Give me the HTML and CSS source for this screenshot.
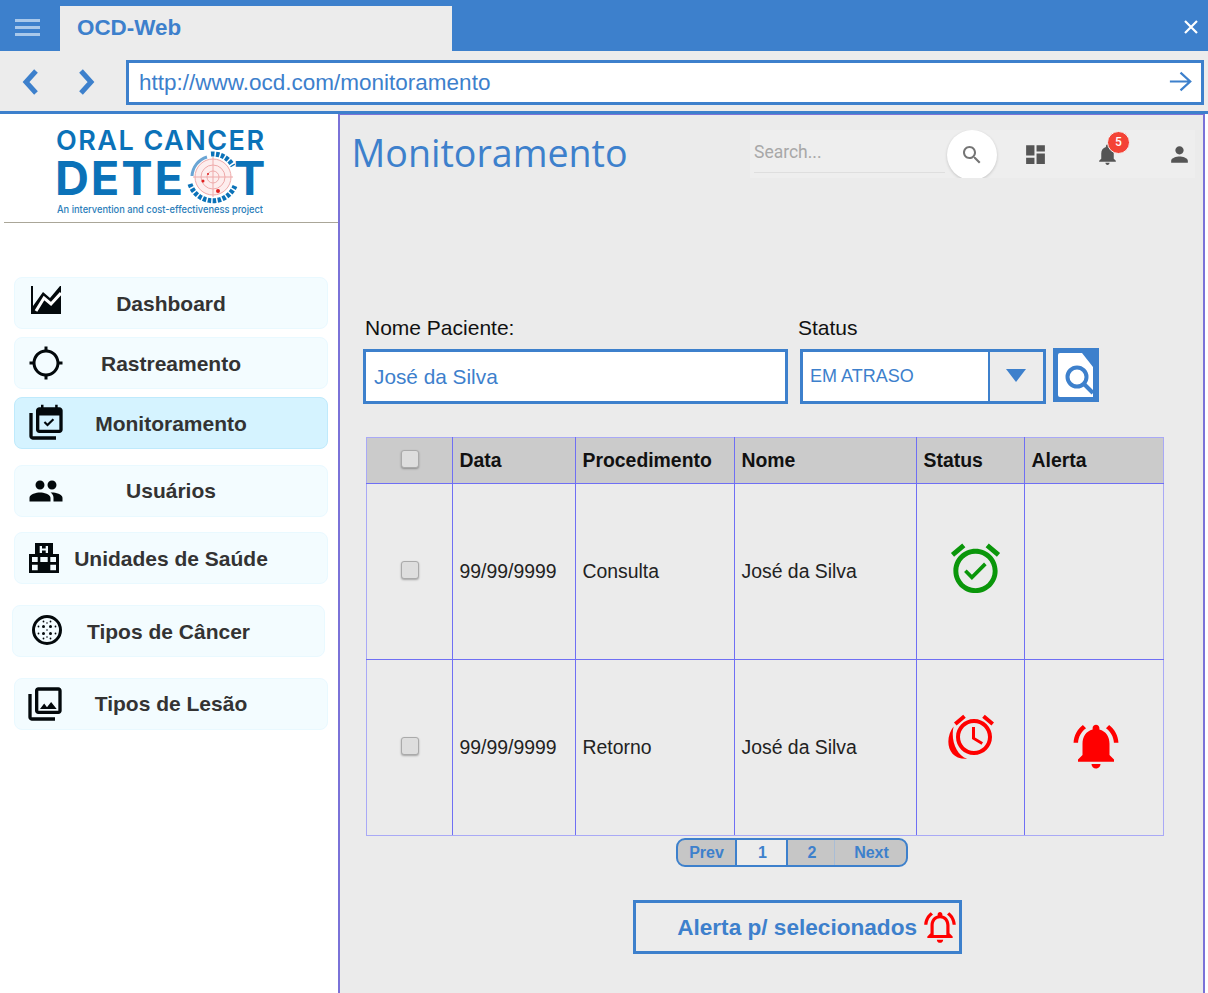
FILE: index.html
```html
<!DOCTYPE html>
<html lang="pt">
<head>
    <meta charset="UTF-8">
    <meta name="viewport" content="width=device-width, initial-scale=1.0">
    <title>OCD-Web</title>
    <link rel="stylesheet" href="styles.css">
</head>
<body>

    <!-- Barra do navegador -->
    <div class="tabbar">
        <div class="menu-button">
            <span></span><span></span><span></span>
        </div>
        <div class="tab">OCD-Web</div>
        <svg class="close-icon" viewBox="0 0 16 16"><path d="M2 2 14 14M14 2 2 14"/></svg>
    </div>
    <div class="addressbar">
        <svg class="nav-arrow" viewBox="0 0 20 28"><path d="M15 3 5 14 15 25"/></svg>
        <svg class="nav-arrow" viewBox="0 0 20 28"><path d="M5 3 15 14 5 25"/></svg>
        <div class="url">
            <span>http://www.ocd.com/monitoramento</span>
            <svg class="go-icon" viewBox="0 0 26 24"><path d="M1 12H24M13 2 24 12 13 22"/></svg>
        </div>
    </div>

    <div class="page">
        <aside class="sidebar">
            <div class="logo">
                <svg viewBox="0 0 334 108" width="334" height="108">
                    <g class="logo-text">
                        <text x="52" y="36" class="logo-top" textLength="208" lengthAdjust="spacing">ORAL CANCER</text>
                        <text x="51" y="81" class="logo-big" textLength="128" lengthAdjust="spacing">DETE</text>
                        <text x="230" y="81" class="logo-big">T</text>
                        <text x="53" y="99" class="logo-sub" textLength="206" lengthAdjust="spacingAndGlyphs">An intervention and cost-effectiveness project</text>
                    </g>
                    <g class="logo-target">
                        <circle class="target-fill" cx="209" cy="63" r="18"/>
                        <circle cx="209" cy="63" r="12"/>
                        <circle cx="209" cy="63" r="6"/>
                        <path d="M189 63H229M209 43V83"/>
                    </g>
                    <path class="logo-ring" d="M188 62A21 21 0 0 1 203 43"/>
                    <path class="logo-dash" d="M186 70A24 24 0 0 0 231 72M207 40A23 23 0 0 1 229 52"/>
                    <circle class="logo-dot" cx="199" cy="67" r="1.500"/>
                    <circle class="logo-dot" cx="204" cy="60" r="1"/>
                    <circle class="logo-dot" cx="214" cy="77" r="2"/>
                </svg>
            </div>

            <nav class="menu">
                <a class="menu-item item-dashboard">
                    <svg class="menu-icon" viewBox="0 0 32 30">
                        <path d="M1 1H3V21L13 7 20 13 30 1H31V29H1Z"/>
                        <path class="cut" d="M6 26 14 13 21 19 31 8"/>
                    </svg>
                    <span>Dashboard</span>
                </a>
                <a class="menu-item item-rastreamento">
                    <svg class="menu-icon" viewBox="0 0 24 24"><path d="M20.94 11c-.46-4.170-3.770-7.480-7.940-7.940V1h-2v2.060C6.830 3.520 3.520 6.830 3.060 11H1v2h2.060c.46 4.170 3.770 7.480 7.940 7.940V23h2v-2.060c4.170-.46 7.480-3.770 7.940-7.940H23v-2h-2.060zM12 19c-3.870 0-7-3.130-7-7s3.130-7 7-7 7 3.130 7 7-3.130 7-7 7z"/></svg>
                    <span>Rastreamento</span>
                </a>
                <a class="menu-item item-monitoramento active">
                    <svg class="menu-icon" viewBox="0 0 24 24"><path d="M2 6v14c0 1.100.9 2 2 2h14v-2H4V6H2z"/><path d="M9 1h1.500v1.500h7V1H19v1.500h1c1.100 0 2 .9 2 2V16c0 1.100-.9 2-2 2H8c-1.100 0-2-.9-2-2V4.500c0-1.100.9-2 2-2h1V1zM8 7.500V16h12V7.500H8zm4.900 6.600-2.300-2.200.9-.9 1.400 1.300 3.100-3 .9.900-4 3.900z" fill-rule="evenodd"/></svg>
                    <span>Monitoramento</span>
                </a>
                <a class="menu-item item-usuarios">
                    <svg class="menu-icon" viewBox="0 0 24 24"><path d="M16 11c1.660 0 2.990-1.340 2.990-3S17.660 5 16 5c-1.660 0-3 1.340-3 3s1.340 3 3 3zm-8 0c1.660 0 2.990-1.340 2.990-3S9.660 5 8 5C6.340 5 5 6.340 5 8s1.340 3 3 3zm0 2c-2.330 0-7 1.170-7 3.500V19h14v-2.500c0-2.330-4.670-3.500-7-3.500zm8 0c-.29 0-.62.02-.97.05 1.160.84 1.970 1.970 1.970 3.450V19h6v-2.500c0-2.330-4.670-3.500-7-3.500z"/></svg>
                    <span>Usuários</span>
                </a>
                <a class="menu-item item-unidades">
                    <svg class="menu-icon" viewBox="0 0 32 32">
                        <path fill-rule="evenodd" d="M7 1H25V12H31V31H1V12H7ZM11.700 4V11H14V8.600H17.700V11H20V4H17.700V6.400H14V4ZM4 15V20H9.700V15ZM12.300 15V20H19.700V15ZM22.300 15V20H28V15ZM4 22.700V28.300H9.700V22.700ZM22.300 22.700V28.300H28V22.700Z"/>
                    </svg>
                    <span>Unidades de Saúde</span>
                </a>
                <a class="menu-item item-cancer">
                    <svg class="menu-icon" viewBox="0 0 30 30">
                        <circle class="ring" cx="15" cy="15" r="13.500"/>
                        <g class="dots">
                            <circle cx="11.500" cy="11.500" r="1.500"/><circle cx="18.500" cy="11.500" r="1.500"/>
                            <circle cx="11.500" cy="18.500" r="1.500"/><circle cx="18.500" cy="18.500" r="1.500"/>
                            <circle cx="11.500" cy="6.500" r=".9"/><circle cx="18.500" cy="6.500" r=".9"/>
                            <circle cx="11.500" cy="23.500" r=".9"/><circle cx="18.500" cy="23.500" r=".9"/>
                            <circle cx="6.500" cy="11.500" r=".9"/><circle cx="6.500" cy="18.500" r=".9"/>
                            <circle cx="23.500" cy="11.500" r=".9"/><circle cx="23.500" cy="18.500" r=".9"/>
                            <circle cx="15" cy="8" r=".8"/><circle cx="15" cy="15" r=".8"/><circle cx="15" cy="22" r=".8"/>
                        </g>
                    </svg>
                    <span>Tipos de Câncer</span>
                </a>
                <a class="menu-item item-lesao">
                    <svg class="menu-icon" viewBox="0 0 24 24"><path d="M20 4v12H8V4h12m0-2H8c-1.100 0-2 .9-2 2v12c0 1.100.9 2 2 2h12c1.100 0 2-.9 2-2V4c0-1.100-.9-2-2-2zm-8.500 9.670l1.690 2.260 2.480-3.100L19 15H9zM2 6v14c0 1.100.9 2 2 2h14v-2H4V6H2z"/></svg>
                    <span>Tipos de Lesão</span>
                </a>
            </nav>
        </aside>

        <main class="content">
            <div class="header">
                <h1>Monitoramento</h1>
                <div class="toolbar">
                    <div class="search-field">Search...</div>
                    <div class="search-button">
                        <svg viewBox="0 0 24 24"><path d="M15.500 14h-.79l-.28-.27C15.410 12.590 16 11.110 16 9.500 16 5.910 13.090 3 9.500 3S3 5.910 3 9.500 5.910 16 9.500 16c1.610 0 3.090-.59 4.230-1.570l.27.28v.79l5 4.990L20.490 19l-4.990-5zm-6 0C7.010 14 5 11.990 5 9.500S7.010 5 9.500 5 14 7.010 14 9.500 11.990 14 9.500 14z"/></svg>
                    </div>
                    <svg class="tool-icon tool-dash" viewBox="0 0 24 24"><path d="M3 13h8V3H3v10zm0 8h8v-6H3v6zm10 0h8V11h-8v10zm0-18v6h8V3h-8z"/></svg>
                    <div class="tool-bell">
                        <svg class="tool-icon" viewBox="0 0 24 24"><path d="M12 22c1.100 0 2-.9 2-2h-4c0 1.100.89 2 2 2zm6-6v-5c0-3.070-1.640-5.640-4.500-6.320V4c0-.83-.67-1.500-1.500-1.500s-1.500.67-1.500 1.500v.68C7.630 5.360 6 7.920 6 11v5l-2 2v1h16v-1l-2-2z"/></svg>
                        <span class="badge">5</span>
                    </div>
                    <svg class="tool-icon tool-user" viewBox="0 0 24 24"><path d="M12 12c2.210 0 4-1.790 4-4s-1.790-4-4-4-4 1.790-4 4 1.790 4 4 4zm0 2c-2.670 0-8 1.340-8 4v2h16v-2c0-2.660-5.330-4-8-4z"/></svg>
                </div>
            </div>

            <div class="filters">
                <div class="field field-name">
                    <label>Nome Paciente:</label>
                    <div class="input">José da Silva</div>
                </div>
                <div class="field field-status">
                    <label>Status</label>
                    <div class="select">
                        <span class="select-value">EM ATRASO</span>
                        <span class="select-arrow"></span>
                    </div>
                </div>
                <button class="search-doc">
                    <svg viewBox="0 0 46 54">
                        <path class="doc" d="M7 5H29L40 19V49H7Q5 49 5 47V7Q5 5 7 5Z"/>
                        <circle class="lens" cx="24" cy="29" r="9.500"/>
                        <path class="lens" d="M31 36 40 45"/>
                    </svg>
                </button>
            </div>

            <table class="results">
                <colgroup>
                    <col class="col-check"><col class="col-date"><col class="col-proc"><col class="col-name"><col class="col-status"><col class="col-alert">
                </colgroup>
                <thead>
                    <tr>
                        <th class="check"><input type="checkbox"></th>
                        <th>Data</th>
                        <th>Procedimento</th>
                        <th>Nome</th>
                        <th>Status</th>
                        <th>Alerta</th>
                    </tr>
                </thead>
                <tbody>
                    <tr>
                        <td class="check"><input type="checkbox"></td>
                        <td>99/99/9999</td>
                        <td>Consulta</td>
                        <td>José da Silva</td>
                        <td class="icon-cell">
                            <svg class="alarm-ok" viewBox="0 0 24 24"><path d="M22 5.720l-4.600-3.860-1.290 1.530 4.600 3.860L22 5.720zM7.880 3.390L6.600 1.860 2 5.710l1.290 1.530 4.590-3.850zM12 4c-4.970 0-9 4.030-9 9s4.020 9 9 9c4.970 0 9-4.030 9-9s-4.030-9-9-9zm0 16c-3.870 0-7-3.130-7-7s3.130-7 7-7 7 3.130 7 7-3.130 7-7 7zm-1.460-5.470L8.410 12.400l-1.060 1.060 3.180 3.180 6-6-1.060-1.060-4.930 4.950z"/></svg>
                        </td>
                        <td></td>
                    </tr>
                    <tr>
                        <td class="check"><input type="checkbox"></td>
                        <td>99/99/9999</td>
                        <td>Retorno</td>
                        <td>José da Silva</td>
                        <td class="icon-cell">
                            <svg class="alarm-late" viewBox="-2 0 26 24">
                                <path d="M22 5.720l-4.600-3.860-1.290 1.530 4.600 3.860L22 5.720zM7.880 3.390L6.600 1.860 2 5.710l1.290 1.530 4.590-3.850zM12.500 8H11v6l4.750 2.850.75-1.230-4-2.370V8zM12 4c-4.970 0-9 4.030-9 9s4.030 9 9 9 9-4.030 9-9-4.030-9-9-9zm0 16c-3.870 0-7-3.130-7-7s3.130-7 7-7 7 3.130 7 7-3.130 7-7 7z"/>
                                <path d="M1.800 7.800C-3 14-1.500 24.500 8.600 23.900 3.200 22.300.2 14.500 1.800 7.800z"/>
                            </svg>
                        </td>
                        <td class="icon-cell">
                            <svg class="bell-on" viewBox="0 0 24 24"><path d="M7.580 4.080L6.150 2.650C3.750 4.480 2.170 7.300 2.030 10.500h2c.15-2.650 1.510-4.970 3.550-6.420zm12.390 6.420h2c-.15-3.200-1.730-6.020-4.120-7.850l-1.420 1.430c2.020 1.450 3.390 3.770 3.540 6.420zM18 11c0-3.070-1.640-5.640-4.500-6.320V4c0-.83-.67-1.500-1.500-1.500s-1.500.67-1.500 1.500v.68C7.630 5.360 6 7.920 6 11v5l-2 2v1h16v-1l-2-2v-5zm-6 11c.14 0 .27-.01.4-.04.65-.14 1.180-.58 1.440-1.180.1-.24.15-.5.15-.78h-4c.01 1.100.9 2 2.010 2z"/></svg>
                        </td>
                    </tr>
                </tbody>
            </table>

            <div class="pagination">
                <a class="page-prev">Prev</a>
                <a class="page-current">1</a>
                <a class="page-two">2</a>
                <a class="page-next">Next</a>
            </div>

            <button class="alert-button">
                <span>Alerta p/ selecionados</span>
                <svg viewBox="0 0 24 24"><path d="M7.580 4.080L6.150 2.650C3.750 4.480 2.170 7.300 2.030 10.500h2c.15-2.650 1.510-4.970 3.550-6.420zm12.390 6.420h2c-.15-3.200-1.730-6.020-4.120-7.850l-1.420 1.430c2.020 1.450 3.390 3.770 3.540 6.420zM12 22c1.100 0 2-.9 2-2h-4c0 1.100.9 2 2 2zm6-6v-5c0-3.070-1.630-5.640-4.500-6.320V4c0-.83-.67-1.500-1.500-1.500s-1.500.67-1.500 1.500v.68C7.640 5.360 6 7.920 6 11v5l-2 2v1h16v-1l-2-2zm-2 1H8v-6c0-2.480 1.510-4.500 4-4.500s4 2.020 4 4.500v6z"/></svg>
            </button>
        </main>
    </div>

</body>
</html>
```

FILE: styles.css
```css
html, body {
    margin: 0;
    height: 993px;
    overflow: hidden;
}
body {
    font-family: 'Liberation Sans', Arial, sans-serif;
    background-color: white;
    color: #111;
}

/* barra do navegador */
.tabbar {
    height: 51px;
    background-color: #3d80cc;
    display: flex;
    align-items: flex-end;
}
.menu-button {
    width: 60px;
    height: 51px;
    display: flex;
    flex-direction: column;
    justify-content: center;
    align-items: center;
    gap: 4px;
    padding: 3px 5px 0 0;
    box-sizing: border-box;
}
.menu-button span {
    width: 25px;
    height: 3px;
    background-color: #a9c8ea;
}
.tab {
    width: 392px;
    height: 45px;
    background-color: #ececec;
    color: #3d80cc;
    font-size: 22.4px;
    font-weight: bold;
    line-height: 44px;
    padding-left: 17px;
    box-sizing: border-box;
}
.close-icon {
    width: 16px;
    height: 16px;
    margin: 0 9px 16px auto;
    fill: none;
    stroke: white;
    stroke-width: 2.2;
}
.addressbar {
    height: 60px;
    background-color: #ececec;
    border-bottom: 3px solid #3d80cc;
    display: flex;
    align-items: center;
    padding-left: 21px;
    gap: 35px;
}
.nav-arrow {
    width: 20px;
    height: 28px;
    fill: none;
    stroke: #3d80cc;
    stroke-width: 5;
    margin-top: 2px;
}
.url {
    width: 1078px;
    height: 45px;
    margin-left: -5px;
    margin-top: 3px;
    box-sizing: border-box;
    border: 3px solid #3d80cc;
    background-color: white;
    color: #3d80cc;
    font-size: 22.5px;
    padding: 0 10px;
    display: flex;
    align-items: center;
    justify-content: space-between;
}
.go-icon {
    width: 23px;
    height: 23px;
    fill: none;
    stroke: #3d80cc;
    stroke-width: 2.5;
    margin: -2px -1px 0 0;
}

.page {
    display: flex;
    height: 879px;
}

/* menu lateral */
.sidebar {
    width: 338px;
    flex-shrink: 0;
}
.logo {
    height: 108px;
    margin-left: 4px;
    border-bottom: 1px solid #aaa698;
    overflow: hidden;
}
.logo-text text {
    fill: #0b72b8;
    font-family: 'Inter', sans-serif;
    font-weight: 600;
}
.logo-top {
    font-size: 27px;
}
.logo-text .logo-big {
    font-size: 47px;
    font-weight: 700;
}
.logo-text .logo-sub {
    font-size: 10px;
    font-weight: 500;
    fill: #2b7db9;
}
.logo-target circle, .logo-target path {
    fill: none;
    stroke: #eeaaaa;
    stroke-width: 1;
}
.logo-target .target-fill {
    fill: #fdeeee;
}
.logo-ring {
    fill: none;
    stroke: #6aa5d4;
    stroke-width: 3;
}
.logo-dash {
    fill: none;
    stroke: #0b72b8;
    stroke-width: 5;
    stroke-dasharray: 3.500 1.500;
}
.logo-dot {
    fill: #e0201f;
}
.menu {
    display: flex;
    flex-direction: column;
}
.menu-item {
    width: 314px;
    height: 52px;
    margin-left: 14px;
    box-sizing: border-box;
    border: 1px solid #e9f9ff;
    border-radius: 8px;
    background-color: #f3fcff;
    display: grid;
    grid-template-columns: 59px 1fr 59px;
    align-items: center;
    justify-items: center;
    font-size: 21px;
    font-weight: bold;
    color: #333;
}
.menu-item span {
    margin-top: 2px;
}
.menu-item.active {
    background-color: #d5f3ff;
    border-color: #bfeafc;
}
.menu-icon {
    width: 36px;
    height: 36px;
    margin-left: 3px;
    fill: #03090c;
}
.menu-icon .cut {
    fill: none;
    stroke: white;
    stroke-width: 3;
}
.menu-icon .ring {
    fill: none;
    stroke: #03090c;
    stroke-width: 3;
}
.item-dashboard { margin-top: 54px; }
.item-dashboard .menu-icon { width: 32px; height: 30px; margin-bottom: 6px; }
.item-rastreamento { margin-top: 8px; }
.item-monitoramento { margin-top: 8px; }
.item-monitoramento .menu-icon { width: 40px; height: 40px; }
.item-usuarios { margin-top: 16px; }
.item-usuarios span { margin-top: 0; }
.item-unidades { margin-top: 15px; }
.item-unidades .menu-icon { width: 32px; height: 32px; margin-left: -2px; }
.item-cancer { width: 313px; margin-top: 21px; margin-left: 12px; }
.item-cancer .menu-icon { width: 30px; height: 30px; margin: 0 0 2px 9px; }
.item-lesao { margin-top: 21px; }
.item-lesao span { margin-top: 0; }
.item-lesao .menu-icon { width: 40px; height: 40px; margin-left: 0; }

/* conteudo */
.content {
    width: 867px;
    box-sizing: border-box;
    background-color: #ebebeb;
    border: 2px solid #7a72d8;
    border-top-width: 1px;
    border-bottom: none;
}
.header {
    display: flex;
    justify-content: space-between;
    padding: 15px 8px 0 11.5px;
}
h1 {
    margin: 2px 0 0;
    font-family: 'Open Sans', sans-serif;
    font-size: 37.6px;
    font-weight: 400;
    line-height: 42px;
    color: #3d80cc;
}
.toolbar {
    width: 445px;
    height: 48px;
    background-color: #eeeeee;
    display: flex;
    align-items: center;
    box-sizing: border-box;
    padding-left: 4px;
    overflow: hidden;
}
.search-field {
    width: 191px;
    height: 43px;
    align-self: flex-start;
    box-sizing: border-box;
    border-bottom: 1px solid #dedede;
    color: #a8a8a8;
    font-family: 'Roboto', sans-serif;
    font-size: 17.5px;
    line-height: 44px;
}
.search-button {
    width: 50px;
    height: 50px;
    flex-shrink: 0;
    border-radius: 50%;
    background-color: white;
    box-shadow: 0 1px 3px rgba(0, 0, 0, 0.18);
    display: flex;
    align-items: center;
    justify-content: center;
    margin-left: 2px;
    margin-top: 2px;
}
.search-button svg {
    width: 24px;
    height: 24px;
    fill: #757575;
}
.tool-icon {
    width: 25px;
    height: 25px;
    fill: #555;
    display: block;
}
.tool-dash { margin-left: 26px; }
.tool-bell {
    position: relative;
    margin-left: 47px;
}
.badge {
    position: absolute;
    top: -11px;
    left: 12px;
    width: 23px;
    height: 23px;
    border-radius: 50%;
    background-color: #f44336;
    border: 1px solid #f4f4f4;
    box-sizing: border-box;
    color: white;
    font-family: 'Roboto', sans-serif;
    font-size: 12px;
    font-weight: 500;
    text-align: center;
    line-height: 21px;
}
.tool-user { margin-left: 47px; }

/* filtros */
.filters {
    display: flex;
    align-items: flex-start;
    margin: 138px 0 0 23px;
}
.field label {
    display: block;
    height: 33px;
    font-size: 21px;
    line-height: 23px;
}
.field-name {
    width: 425px;
}
.field-name label {
    padding-left: 2px;
}
.input {
    height: 55px;
    box-sizing: border-box;
    border: 3px solid #3d80cc;
    background-color: white;
    color: #3d80cc;
    font-size: 20.8px;
    line-height: 49px;
    padding-left: 8px;
}
.field-status {
    width: 248px;
    margin-left: 10px;
}
.select {
    height: 55px;
    margin-left: 2px;
    box-sizing: border-box;
    border: 3px solid #3d80cc;
    background-color: white;
    display: flex;
}
.select-value {
    flex: 1;
    color: #3d80cc;
    font-size: 18px;
    line-height: 49px;
    padding-left: 7px;
}
.select-arrow {
    width: 55px;
    box-sizing: border-box;
    border-left: 2px solid #3d80cc;
    background-color: #ececec;
    position: relative;
}
.select-arrow::after {
    content: "";
    position: absolute;
    left: 16px;
    top: 17px;
    border-left: 10px solid transparent;
    border-right: 10px solid transparent;
    border-top: 13px solid #3d80cc;
}
.search-doc {
    width: 46px;
    height: 54px;
    margin: 32px 0 0 7px;
    padding: 0;
    border: none;
    background-color: #3d80cc;
}
.search-doc svg {
    display: block;
    width: 46px;
    height: 54px;
}
.search-doc .doc {
    fill: white;
}
.search-doc .lens {
    fill: none;
    stroke: #3d80cc;
    stroke-width: 4;
}

/* tabela */
.results {
    margin: 33px 0 0 26px;
    width: 797px;
    table-layout: fixed;
    border-collapse: collapse;
    font-size: 19.4px;
}
.col-check { width: 86px; }
.col-date { width: 123px; }
.col-proc { width: 159px; }
.col-name { width: 182px; }
.col-status { width: 108px; }
.col-alert { width: 139px; }
.results th, .results td {
    border: 1px solid #6f6ff4;
    padding: 0 0 0 6.5px;
    text-align: left;
}
.results th {
    height: 45px;
    background-color: #cbcbcb;
    border-top-color: #a9a9f6;
}
.results td {
    height: 175px;
    color: #222;
}
.results tbody tr:last-child td {
    border-bottom-color: #a9a9f6;
}
.results tr > :first-child {
    border-left-color: #a9a9f6;
}
.results tr > :last-child {
    border-right-color: #a9a9f6;
}
.results .check {
    padding: 0;
    text-align: center;
}
.results input {
    appearance: none;
    width: 18px;
    height: 18px;
    margin: 0 0 5px 0;
    border: 1px solid #aaa;
    border-radius: 3px;
    background-color: #dedede;
    box-shadow: 0 1px 2px rgba(0, 0, 0, 0.3);
    vertical-align: middle;
}
.results .icon-cell {
    padding: 0;
    text-align: center;
}
.icon-cell svg {
    display: block;
    fill: red;
}
.results .alarm-ok {
    width: 59px;
    height: 59px;
    fill: #0a960a;
    margin: -6px 0 0 29px;
}
.alarm-late {
    width: 52px;
    height: 48px;
    margin: -26px 0 0 29px;
}
.bell-on {
    width: 54px;
    height: 54px;
    margin: -3px 0 0 44px;
}

/* paginacao */
.pagination {
    display: flex;
    width: 232px;
    height: 29px;
    margin: 2px 0 0 336px;
    box-sizing: border-box;
    border: 2px solid #3d80cc;
    border-radius: 9px;
    overflow: hidden;
    background-color: #c6c6c6;
    color: #3d80cc;
    font-size: 16px;
    font-weight: bold;
    line-height: 25px;
    text-align: center;
}
.page-prev { width: 59px; border-right: 2px solid #3d80cc; box-sizing: border-box; }
.page-current { width: 51px; padding-left: 2px; background-color: #ececec; border-right: 2px solid #3d80cc; box-sizing: border-box; }
.page-two { width: 47px; padding-left: 2px; border-right: 1px solid #a9bdd6; box-sizing: border-box; }
.page-next { width: 71px; padding-left: 2px; box-sizing: border-box; }

.alert-button {
    display: flex;
    align-items: center;
    justify-content: flex-end;
    width: 329px;
    height: 54px;
    margin: 33px 0 0 293px;
    box-sizing: border-box;
    border: 3px solid #3d80cc;
    padding: 0;
    background-color: #ececec;
    color: #3d80cc;
    font-family: 'Liberation Sans', Arial, sans-serif;
    font-size: 22.6px;
    font-weight: bold;
}
.alert-button span {
    margin-top: 2px;
}
.alert-button svg {
    width: 38px;
    height: 38px;
    fill: red;
    margin-left: 4px;
}
```
